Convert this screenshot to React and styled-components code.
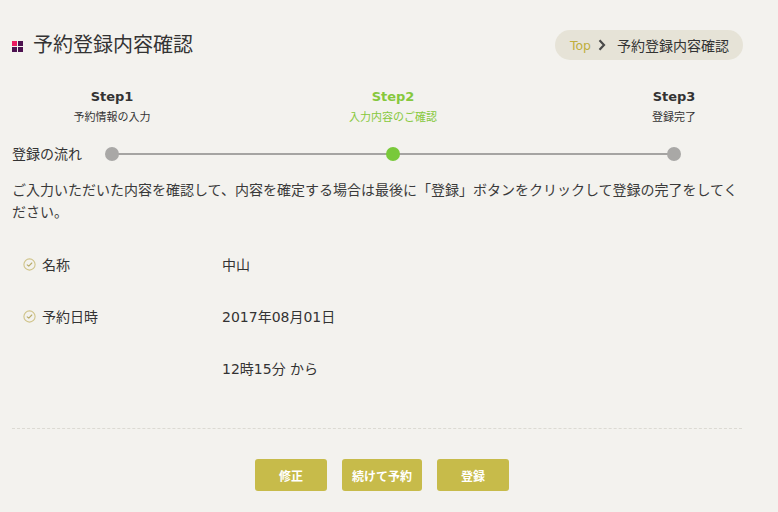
import styled, { createGlobalStyle } from 'styled-components';

const GlobalStyle = createGlobalStyle`
  body {
    margin: 0;
    background: #f3f2ee;
    font-family: "DejaVu Sans", "Noto Sans CJK JP", sans-serif;
    color: #333;
  }
`;

const steps = [
  { title: 'Step1', sub: '予約情報の入力' },
  { title: 'Step2', sub: '入力内容のご確認', active: true },
  { title: 'Step3', sub: '登録完了' },
];

const rows = [
  { label: '名称', value: '中山' },
  { label: '予約日時', value: '2017年08月01日' },
  { label: '', value: '12時15分 から' },
];

const CheckIcon = () => (
  <svg width="13" height="13" viewBox="0 0 13 13" fill="none">
    <circle cx="6.5" cy="6.5" r="5.6" stroke="#d0c48a" strokeWidth="1.1" />
    <path d="M4.2 6.8 L5.8 8.2 L8.8 5" stroke="#b8ab68" strokeWidth="1.1" strokeLinecap="round" strokeLinejoin="round" />
  </svg>
);

const App = () => (
  <>
    <GlobalStyle />
    <ScPage>
      <ScHeader>
        <ScTitle>
          <ScMark>
            <span /><span /><span /><span />
          </ScMark>
          予約登録内容確認
        </ScTitle>
        <ScCrumbs>
          <ScCrumbLink>Top</ScCrumbLink>
          <ScChevron viewBox="0 0 8 12">
            <path d="M1.5 1.2 L6 6 L1.5 10.8" />
          </ScChevron>
          <span>予約登録内容確認</span>
        </ScCrumbs>
      </ScHeader>

      <ScFlow>
        <div />
        <ScStepHeads>
          {steps.map((s) => (
            <ScStepHead key={s.title} $active={s.active}>
              <ScStepTitle>{s.title}</ScStepTitle>
              <ScStepSub>{s.sub}</ScStepSub>
            </ScStepHead>
          ))}
        </ScStepHeads>
        <ScFlowLabel>登録の流れ</ScFlowLabel>
        <ScTrack>
          {steps.map((s) => (
            <ScDot key={s.title} $active={s.active} />
          ))}
        </ScTrack>
      </ScFlow>

      <ScLead>
        ご入力いただいた内容を確認して、内容を確定する場合は最後に「登録」ボタンをクリックして登録の完了をしてください。
      </ScLead>

      <ScList>
        {rows.map((r, i) => (
          <ScRow key={i}>
            <ScLabel>
              {r.label && <CheckIcon />}
              {r.label}
            </ScLabel>
            <ScValue>{r.value}</ScValue>
          </ScRow>
        ))}
      </ScList>

      <ScActions>
        <ScButton>修正</ScButton>
        <ScButton $wide>続けて予約</ScButton>
        <ScButton>登録</ScButton>
      </ScActions>
    </ScPage>
  </>
);

export default App;

const ScPage = styled.div`
  width: 730px;
  padding: 30px 12px 20px;
`;

const ScHeader = styled.div`
  display: flex;
  align-items: center;
  justify-content: space-between;
  height: 30px;
`;

const ScTitle = styled.h1`
  display: flex;
  align-items: center;
  gap: 10px;
  margin: 0;
  font-size: 20px;
  font-weight: 400;
  line-height: 24px;
  color: #333;
`;

const ScMark = styled.div`
  display: grid;
  grid-template-columns: 5px 5px;
  gap: 1px;
  margin-top: 2px;

  span {
    width: 5px;
    height: 5px;
    background: #4d1250;
  }
  span:first-child {
    background: #ec1a62;
  }
`;

const ScCrumbs = styled.div`
  display: flex;
  align-items: center;
  height: 30px;
  padding: 0 14px 0 15px;
  margin-right: -1px;
  background: #e6e3d7;
  border-radius: 15px;
  font-size: 14px;
  color: #333;
`;

const ScCrumbLink = styled.span`
  font-size: 12.5px;
  color: #bfae3c;
`;

const ScChevron = styled.svg`
  width: 8px;
  height: 12px;
  margin: 0 11px 0 7px;
  fill: none;
  stroke: #4a4a4a;
  stroke-width: 2.2;
`;

const ScFlow = styled.div`
  display: grid;
  grid-template-columns: 93px 576px;
  row-gap: 22px;
  margin-top: 28px;
`;

const ScStepHeads = styled.div`
  display: flex;
  justify-content: space-between;
`;

const ScStepHead = styled.div`
  width: 14px;
  display: flex;
  flex-direction: column;
  align-items: center;
  gap: 5px;
  white-space: nowrap;
  color: ${(p) => (p.$active ? '#86c83c' : '#333')};
`;

const ScStepTitle = styled.div`
  font-family: "DejaVu Sans", sans-serif;
  font-weight: 700;
  font-size: 13px;
  line-height: 18px;
`;

const ScStepSub = styled.div`
  font-size: 11px;
  line-height: 14px;
`;

const ScFlowLabel = styled.div`
  font-size: 14px;
  line-height: 14px;
`;

const ScTrack = styled.div`
  position: relative;
  display: flex;
  justify-content: space-between;
  align-items: center;

  &::before {
    content: '';
    position: absolute;
    left: 7px;
    right: 7px;
    top: 6px;
    height: 2px;
    background: #a5a4a2;
  }
`;

const ScDot = styled.span`
  position: relative;
  width: 14px;
  height: 14px;
  border-radius: 50%;
  background: ${(p) => (p.$active ? '#79c93a' : '#a9a8a6')};
`;

const ScLead = styled.p`
  max-width: 729px;
  margin: 18px 0 0;
  font-size: 14px;
  line-height: 22px;
  color: #3a3a3a;
`;

const ScList = styled.div`
  margin-top: 15px;
  padding-bottom: 34px;
  border-bottom: 1px dashed #dcdad3;
`;

const ScRow = styled.div`
  display: grid;
  grid-template-columns: 210px 1fr;
  align-items: center;
  height: 52px;
  font-size: 14px;
`;

const ScLabel = styled.div`
  display: flex;
  align-items: center;
  gap: 6px;
  padding-left: 11px;
`;

const ScValue = styled.div``;

const ScActions = styled.div`
  display: flex;
  justify-content: center;
  gap: 15px;
  margin-top: 30px;
  padding-left: 10px;
`;

const ScButton = styled.button`
  width: ${(p) => (p.$wide ? '80px' : '72px')};
  height: 32px;
  border: none;
  border-radius: 3px;
  background: #c7bb4a;
  color: #fff;
  font-family: "Noto Sans CJK JP", sans-serif;
  font-size: 12px;
  font-weight: 700;
  padding: 0;
`;
